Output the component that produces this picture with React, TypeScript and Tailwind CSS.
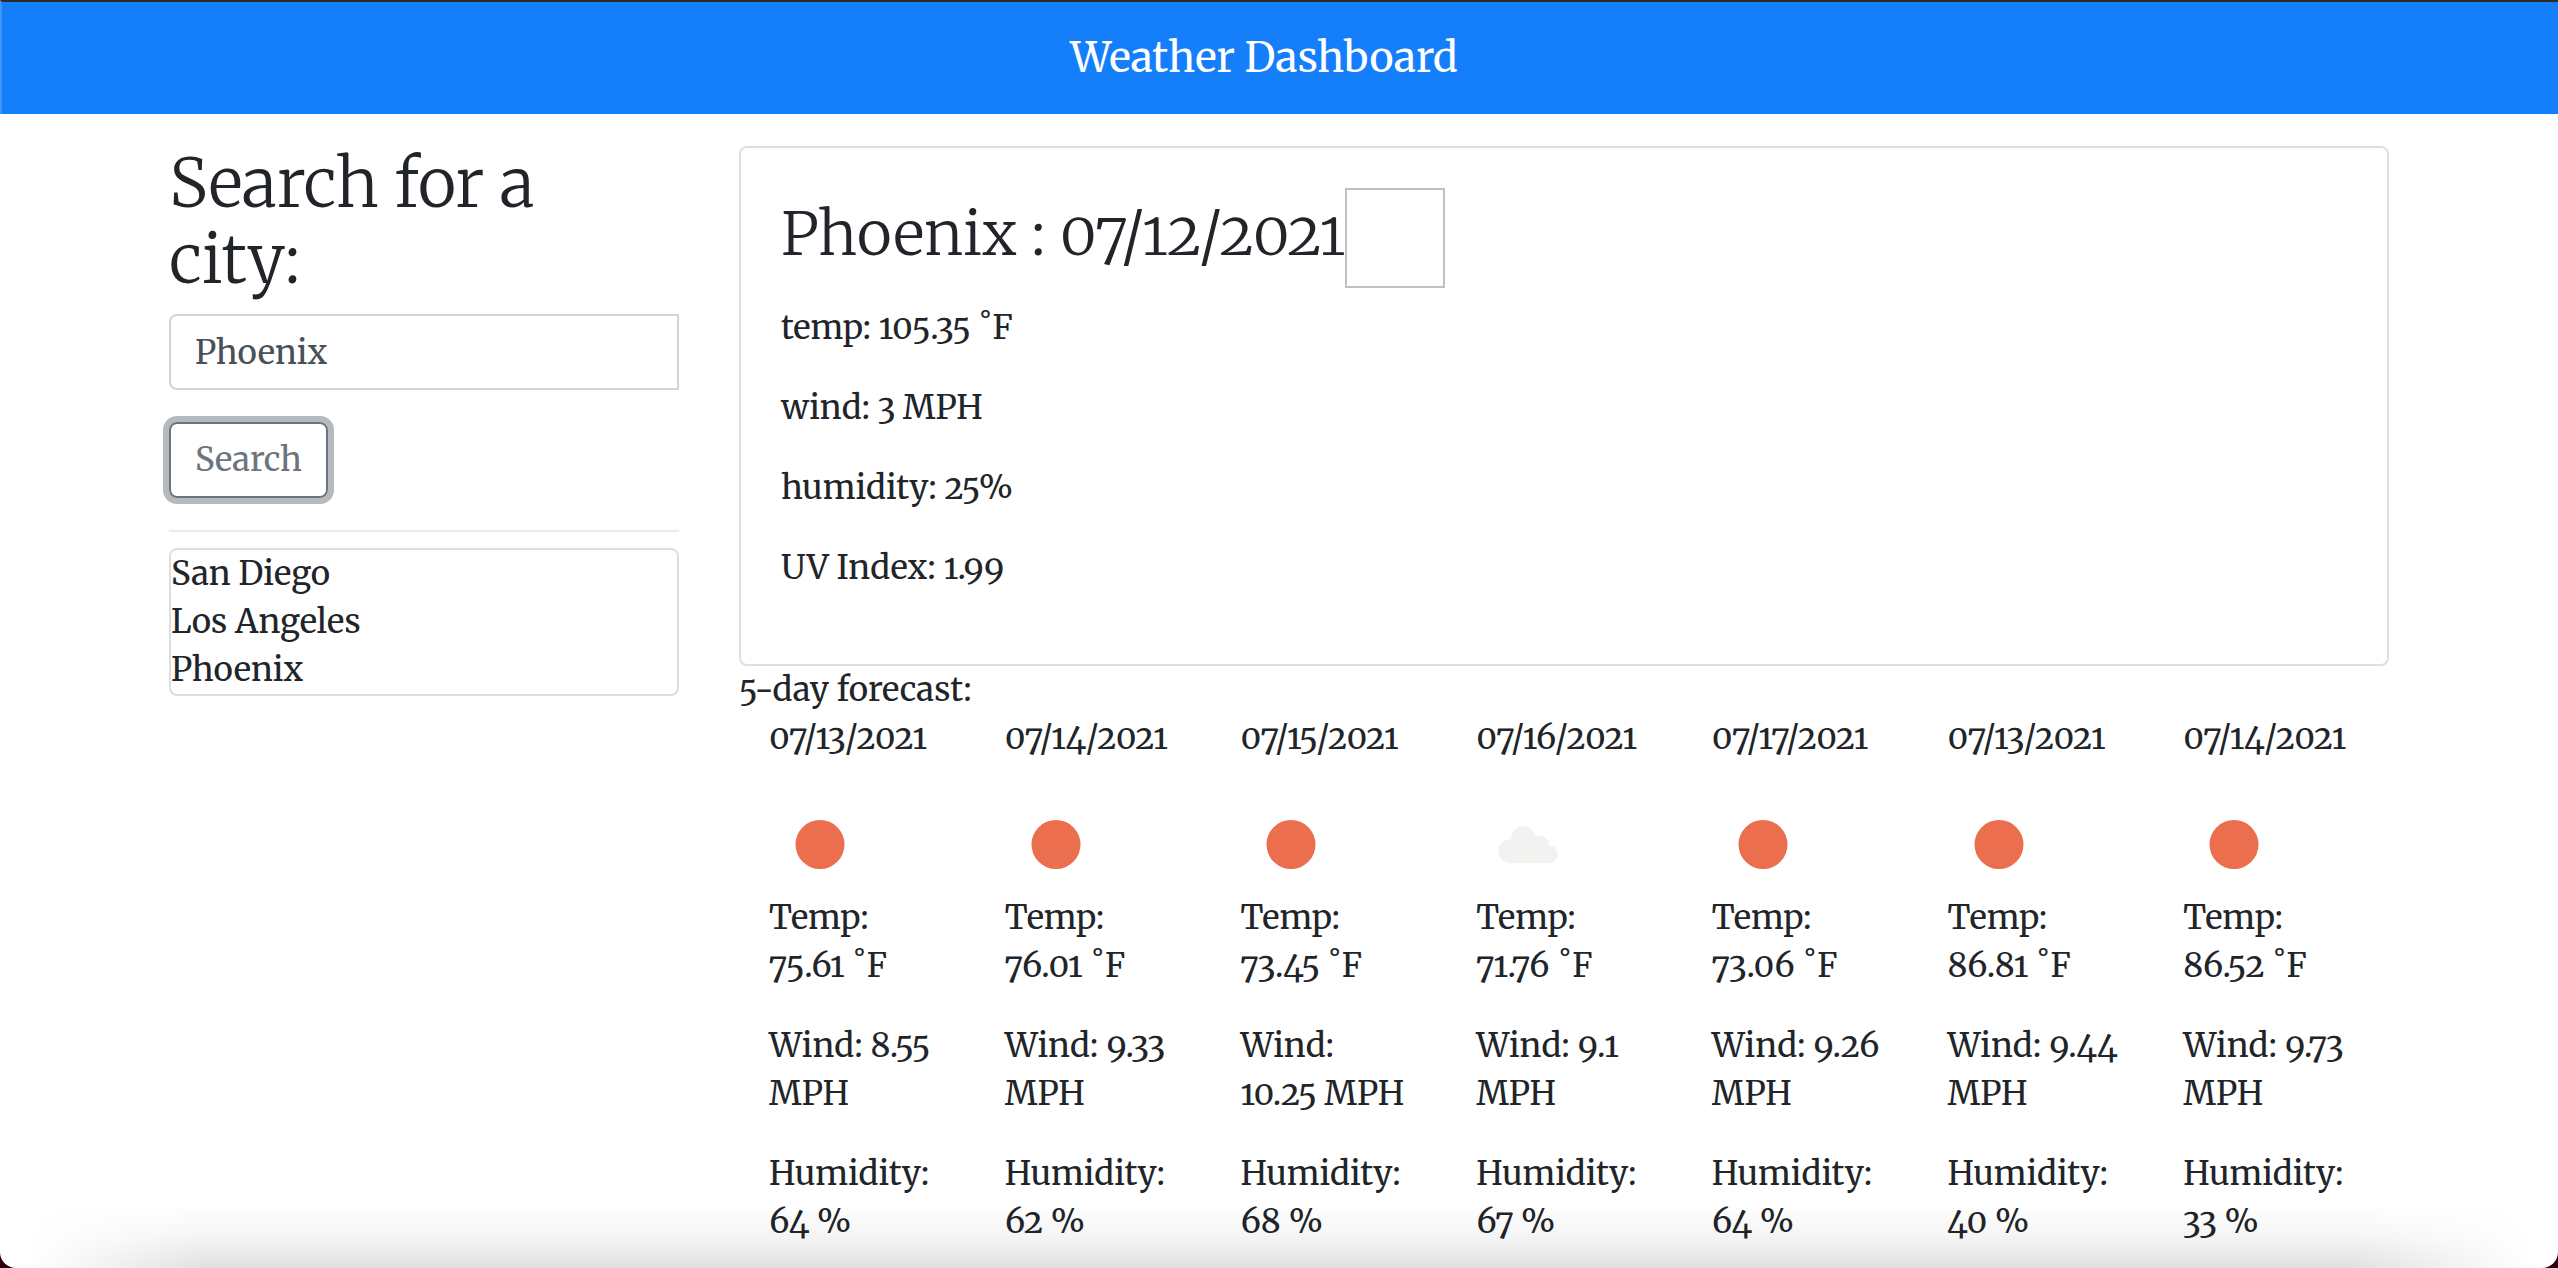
import { useState } from "react";

type Day = {
  date: string;
  icon: "sun" | "cloud";
  temp: string;
  wind: string;
  humidity: string;
};

const cities = ["San Diego", "Los Angeles", "Phoenix"];

const days: Day[] = [
  { date: "07/13/2021", icon: "sun", temp: "75.61", wind: "8.55", humidity: "64" },
  { date: "07/14/2021", icon: "sun", temp: "76.01", wind: "9.33", humidity: "62" },
  { date: "07/15/2021", icon: "sun", temp: "73.45", wind: "10.25", humidity: "68" },
  { date: "07/16/2021", icon: "cloud", temp: "71.76", wind: "9.1", humidity: "67" },
  { date: "07/17/2021", icon: "sun", temp: "73.06", wind: "9.26", humidity: "64" },
  { date: "07/13/2021", icon: "sun", temp: "86.81", wind: "9.44", humidity: "40" },
  { date: "07/14/2021", icon: "sun", temp: "86.52", wind: "9.73", humidity: "33" },
];

function WeatherIcon({ kind }: { kind: Day["icon"] }) {
  return (
    <svg viewBox="0 0 100 100" className="size-[100px]" aria-hidden="true">
      {kind === "sun" ? (
        <circle cx="51" cy="50.5" r="24.5" fill="#eb6e4e" />
      ) : (
        <g fill="#f2f2f0">
          <circle cx="47.5" cy="44.5" r="12.3" />
          <circle cx="34.3" cy="57.4" r="11.8" />
          <circle cx="64.5" cy="49.5" r="7.8" />
          <circle cx="72.7" cy="60.2" r="9" />
          <rect x="33.5" y="46" width="39" height="23.2" />
        </g>
      )}
    </svg>
  );
}

function ForecastDay({ day }: { day: Day }) {
  return (
    <div className="min-w-0 pl-[30px]">
      <p className="mb-8">{day.date}</p>
      <WeatherIcon kind={day.icon} />
      <p className="mb-8">
        Temp:
        <br />
        {day.temp} ˚F
      </p>
      <p className="mb-8">
        Wind: {day.wind.length > 4 && <br />}
        {day.wind} {day.wind.length <= 4 && <br />}
        MPH
      </p>
      <p className="mb-8">
        Humidity:
        <br />
        {day.humidity} %
      </p>
    </div>
  );
}

export default function App() {
  const [city, setCity] = useState("Phoenix");

  return (
    <div className="relative h-screen overflow-hidden bg-[#2b0010]">
      <div className="h-full overflow-hidden rounded-b-2xl bg-white font-['Merriweather','DejaVu_Serif_Condensed','DejaVu_Serif',serif] text-[33px] leading-[48px] oldstyle-nums text-[#212529]">
        <header className="flex h-[114px] items-center justify-center border-l-2 border-t-2 border-l-[#3d95fc] border-t-[#2a2a2a] bg-[#147efb] pr-8">
          <a href="#" className="text-[41px] leading-[60px] text-white">
            Weather Dashboard
          </a>
        </header>

        <main className="mx-auto flex max-w-[2280px] pt-8">
          <aside className="w-1/4 px-[30px]">
            <form onSubmit={(e) => e.preventDefault()}>
              <label
                htmlFor="city"
                className="mb-4 block text-[66px] font-[350] leading-[76px]"
              >
                Search for a
                <br />
                city:
              </label>
              <input
                id="city"
                type="text"
                value={city}
                onChange={(e) => setCity(e.target.value)}
                className="block h-[76px] w-full rounded-l-lg border-2 border-[#ced4da] bg-white px-6 text-[#495057] outline-none"
              />
              <button
                type="submit"
                className="mt-8 block h-[76px] rounded-lg border-2 border-[#6c757d] px-6 text-[#6c757d] ring-6 ring-[#b5babe]"
              >
                Search
              </button>
            </form>
            <hr className="mb-4 mt-8 border-t-2 border-[#e9ecef]" />
            <ul className="rounded-lg border-2 border-[#dfdfdf]">
              {cities.map((name) => (
                <li key={name}>{name}</li>
              ))}
            </ul>
          </aside>

          <div className="w-3/4 px-[30px]">
            <section className="rounded-lg border-2 border-[#dfdfdf] p-10">
              <h2 className="mb-4 flex items-start text-[60px] font-[350] leading-[92px]">
                Phoenix : 07/12/2021
                <span className="size-[100px] border-2 border-[#c0c0c0]" />
              </h2>
              <p className="mb-8">temp: 105.35 ˚F</p>
              <p className="mb-8">wind: 3 MPH</p>
              <p className="mb-8">humidity: 25%</p>
              <p className="mb-8">UV Index: 1.99</p>
            </section>
            <section>
              <h3>5-day forecast:</h3>
              <div className="grid grid-cols-7">
                {days.map((day, i) => (
                  <ForecastDay key={i} day={day} />
                ))}
              </div>
            </section>
          </div>
        </main>
      </div>
      <div className="pointer-events-none absolute inset-x-0 bottom-0 h-16 bg-linear-to-t from-black/12 via-black/4 to-transparent mask-x-from-92% mask-x-to-99%" />
    </div>
  );
}
